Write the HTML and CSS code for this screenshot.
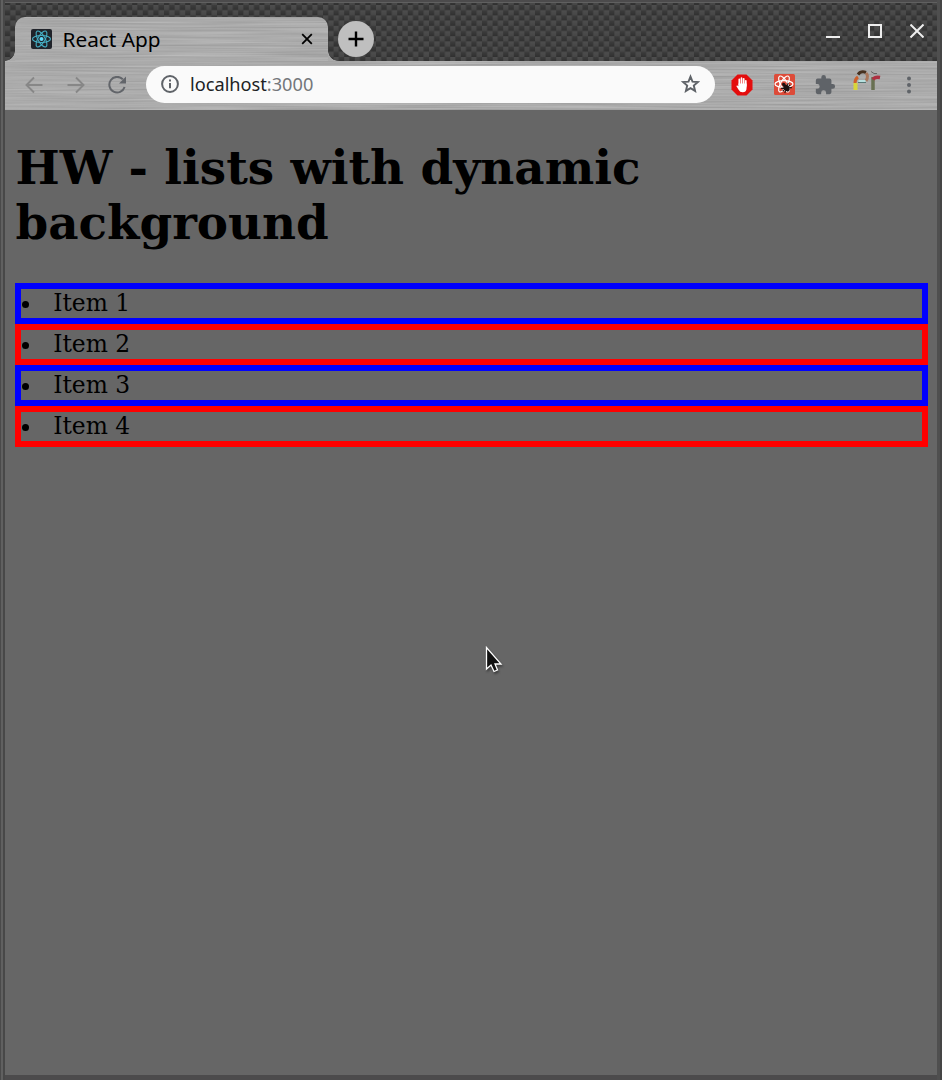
FILE: index.html
```
<!DOCTYPE html>
<html lang="en">
<head>
<meta charset="utf-8">
<title>React App</title>
<link rel="stylesheet" href="styles.css">
</head>
<body>
<div class="window">
  <header class="tabstrip">
    <svg class="texture" width="932" height="58">
      <defs>
        <linearGradient id="thread" x2="0" y2="1"><stop stop-color="#4e4e4e"/><stop offset=".45" stop-color="#474747"/><stop offset=".55" stop-color="#3b3b3b"/><stop offset="1" stop-color="#303030"/></linearGradient>
        <pattern id="weave" width="10.6" height="10.400" patternUnits="userSpaceOnUse" y="2"><rect width="5.300" height="10.400" fill="url(#thread)"/><rect x="5.300" y="-5.200" width="5.300" height="10.400" fill="url(#thread)"/><rect x="5.300" y="5.200" width="5.300" height="10.400" fill="url(#thread)"/></pattern>
      </defs>
      <rect width="100%" height="100%" fill="url(#weave)"/>
    </svg>
    <div class="tab">
      <svg class="texture metal-tab" width="313" height="44"><defs><filter id="brushed" x="0" y="0" width="100%" height="100%" color-interpolation-filters="sRGB"><feTurbulence type="fractalNoise" baseFrequency="0.008 0.6" numOctaves="2" seed="4"/><feColorMatrix values=".16 0 0 0 .59 .16 0 0 0 .59 .16 0 0 0 .59 0 0 0 0 1"/></filter></defs><rect width="100%" height="100%" filter="url(#brushed)"/></svg>
      <svg class="favicon" width="21" height="20" viewBox="0 0 21 20"><rect width="21" height="20" rx="2" fill="#20232a"/><g fill="none" stroke="#45afc5" stroke-width="1.1" transform="translate(10.5 10)"><ellipse rx="9" ry="3.5"/><ellipse rx="9" ry="3.5" transform="rotate(60)"/><ellipse rx="9" ry="3.5" transform="rotate(120)"/><circle r="2" fill="#61dafb" stroke="none"/></g></svg>
      <span class="tab-title">React App</span>
      <svg class="tab-close" width="12" height="12" viewBox="0 0 12 12"><path d="M1.2 1.2L10.800 10.800M10.800 1.200L1.200 10.800" stroke="#000" stroke-width="1.8"/></svg>
    </div>
    <button class="new-tab" aria-label="New tab"><svg width="16" height="16" viewBox="0 0 16 16"><path d="M8 .5v15M.5 8h15" stroke="#000" stroke-width="2.4"/></svg></button>
    <div class="controls">
      <svg width="14" height="14" viewBox="0 0 14 14"><path d="M0 13h14" stroke="#eee" stroke-width="2"/></svg>
      <svg width="14" height="14" viewBox="0 0 14 14"><rect x="1" y="1" width="12" height="12" fill="none" stroke="#eee" stroke-width="2"/></svg>
      <svg width="14" height="14" viewBox="0 0 14 14"><path d="M.5 .5l13 13M13.500 .5l-13 13" stroke="#eee" stroke-width="2"/></svg>
    </div>
  </header>
  <nav class="toolbar">
    <svg class="texture" width="932" height="49"><rect width="100%" height="100%" filter="url(#brushed)"/></svg>
    <svg class="back" width="18" height="18" viewBox="0 0 18 18"><path d="M17.500 9H1.500M9 1.500L1.500 9L9 16.500" fill="none" stroke="#878787" stroke-width="1.9"/></svg>
    <svg class="forward" width="18" height="18" viewBox="0 0 18 18"><path d="M.5 9h16M9 1.500L16.500 9L9 16.500" fill="none" stroke="#878787" stroke-width="1.9"/></svg>
    <svg class="reload" width="18" height="18" viewBox="0 0 18 18"><path d="M14.800 3.300A7.800 7.800 0 1 0 16.600 11" fill="none" stroke="#62656a" stroke-width="2"/><path d="M18 .5V7.500h-7z" fill="#62656a"/></svg>
    <div class="address">
      <svg width="18" height="18" viewBox="0 0 18 18"><circle cx="9" cy="9" r="7.900" fill="none" stroke="#5f6368" stroke-width="2"/><path d="M9 8v5.200M9 4.500v2" stroke="#5f6368" stroke-width="2"/></svg>
      <span class="url">localhost<span class="port">:3000</span></span>
      <svg class="star" width="20" height="20" viewBox="0 0 20 20"><path d="M10.500 2.600l2 5 5.400.45-4.100 3.550 1.300 5.300-4.600-2.800L5.900 16.900l1.300-5.300L3.100 8.050l5.400-.45z" fill="none" stroke="#5f6368" stroke-width="1.900"/></svg>
    </div>
    <div class="extensions">
      <svg class="blocker" width="22" height="22" viewBox="0 0 22 22"><path d="M6.500.5h9l6 6v9l-6 6h-9l-6-6v-9z" fill="#e40d0d"/><path d="M8.300 11V5.300M10.500 11V4.200M12.700 11V4.800M14.800 12V6.800" stroke="#fff" stroke-width="1.700" stroke-linecap="round"/><path d="M7.500 9.500h8.100v4.200q0 4.500-4 4.500-2.800 0-4-2.500L5.300 12q.8-1.300 2.200.3z" fill="#fff"/></svg>
      <svg class="react-ext" width="21" height="21" viewBox="0 0 21 21"><rect width="21" height="21" rx="1.500" fill="#dd4b39"/><g fill="none" stroke="#fff" stroke-width="1.200" transform="translate(10 10)"><ellipse rx="9" ry="3.400"/><ellipse rx="9" ry="3.400" transform="rotate(60)"/><ellipse rx="9" ry="3.400" transform="rotate(120)"/></g><g transform="translate(12.500 14) rotate(-38)"><ellipse rx="2.500" ry="3.800" fill="#1d1111"/><circle cy="-4.500" r="1.700" fill="#1d1111"/><path d="M-4.500-3L4.500 3M4.500-3L-4.500 3M-4.800 0H4.800" stroke="#1d1111" stroke-width="1.100"/></g></svg>
      <svg class="puzzle" width="22" height="22" viewBox="0 0 24 24"><path d="M20.500 11H19V7a2 2 0 0 0-2-2h-4V3.500a2.500 2.500 0 0 0-5 0V5H4a2 2 0 0 0-2 2v3.800h1.500a2.700 2.700 0 0 1 0 5.400H2V20a2 2 0 0 0 2 2h3.800v-1.500a2.700 2.700 0 0 1 5.400 0V22H17a2 2 0 0 0 2-2v-4h1.500a2.500 2.500 0 0 0 0-5z" fill="#5f6368"/></svg>
      <svg class="profile" width="28" height="22" viewBox="0 0 28 22"><g fill="none"><path d="M2.500 20v-7" stroke="#d8d63b" stroke-width="4"/><path d="M2 13q0-4 3-6" stroke="#cd5f2a" stroke-width="3"/><path d="M5 4.500Q8 .5 13 2.500" stroke="#46301f" stroke-width="3"/><path d="M13 3q3 3 0 8" stroke="#a9765b" stroke-width="3"/><path d="M5 12.500h8" stroke="#557674"/><path d="M5.500 11h7" stroke="#b7e0df" stroke-width="2"/><path d="M20 20V7" stroke="#687052" stroke-width="3.500"/><path d="M20 9.500q2-3 7-2" stroke="#ae3042" stroke-width="3.500"/><path d="M18 1.500l3 2h3" stroke="#666"/></g></svg>
      <svg class="menu" width="4" height="18" viewBox="0 0 4 18"><g fill="#5f6368"><circle cx="2" cy="2.500" r="2"/><circle cx="2" cy="9" r="2"/><circle cx="2" cy="15.500" r="2"/></g></svg>
    </div>
  </nav>
  <main class="page">
    <h1>HW - lists with dynamic background</h1>
    <ul class="items">
      <li class="item blue">Item 1</li>
      <li class="item red">Item 2</li>
      <li class="item blue">Item 3</li>
      <li class="item red">Item 4</li>
    </ul>
    <svg class="cursor" width="20" height="28" viewBox="0 0 20 28"><path d="M1.500 1.500v21.500l4.500-4 3 6.500 3.500-1.500-2.500-6H16z" fill="#111" stroke="#fff" stroke-width="1.300"/></svg>
  </main>
</div>
</body>
</html>
```
FILE: styles.css
```
* { box-sizing: border-box; }
body { margin: 0; background: #4f4f4f; }
svg { display: block; flex: none; }
.window {
  height: 1080px;
  padding: 2px 5px 5px;
  display: flex;
  flex-direction: column;
  background: linear-gradient(90deg, #4a4a4a 1px, #606060 1px 3px, #484848 3px 5px, transparent 5px 937px, #4f4f4f 937px 940px, #454545 940px), #4c4b4c;
}
.tabstrip {
  position: relative;
  height: 59px;
  display: flex;
  align-items: flex-start;
  padding: 15px 13px 0 10px;
  border-top: 1px solid #606060;
  background: #3f3f3f;
}
.tabstrip, .tab, .toolbar { isolation: isolate; }
.texture { position: absolute; z-index: -1; inset: 0; }
.metal-tab { border-radius: 10px 10px 0 0; }
.tab {
  position: relative;
  width: 313px;
  height: 44px;
  margin-top: -1px;
  display: flex;
  align-items: center;
  padding: 0 15px 0 16px;
}
.tab::before, .tab::after {
  content: "";
  position: absolute;
  bottom: 0;
  width: 10px;
  height: 10px;
}
.tab::before { left: -10px; background: radial-gradient(circle at 0 0, transparent 9.500px, #aaa 10px); }
.tab::after { right: -10px; background: radial-gradient(circle at 100% 0, transparent 9.500px, #aaa 10px); }
.tab-title { margin-left: 10.500px; flex: 1; font: 20.800px/28px "Noto Sans", sans-serif; color: #000; }
.new-tab {
  width: 36px;
  height: 36px;
  margin: 3px 0 0 10px;
  padding: 0;
  border: 0;
  border-radius: 50%;
  display: grid;
  place-items: center;
  background: #bfbfbf;
}
.controls { margin: 6px .5px 0 auto; display: flex; gap: 28px; }
.toolbar {
  position: relative;
  height: 49px;
  display: flex;
  align-items: center;
  padding: 0 26px 2px 20px;
  background: #acacac;
}
.forward { margin-left: 24px; }
.reload { margin-left: 23px; }
.address {
  width: 569px;
  height: 37px;
  margin-left: 20px;
  padding: 0 15px 1px;
  display: flex;
  align-items: center;
  border-radius: 19px;
  background: #fafafa;
}
.url { margin-left: 11px; flex: 1; font: 18.200px/26px "Noto Sans", sans-serif; color: #202124; }
.port { color: #74777b; }
.extensions { display: flex; align-items: center; margin-left: 16.400px; }
.react-ext { margin-left: 20.600px; }
.puzzle { margin-left: 19.400px; }
.profile { margin: -7px 0 0 16.400px; }
.menu { margin-left: 26px; }
.page {
  flex: 1;
  position: relative;
  padding: 30px 9px 0 10px;
  background: #666;
  color: #000;
  font-family: "DejaVu Serif", serif;
}
h1 { margin: 0 0 33px .5px; font-size: 46.800px; line-height: 55px; font-weight: 700; }
.items { margin: 0; padding: 0; list-style: disc inside; }
.item { height: 41px; padding-left: .8px; border: 6px solid; font-size: 23.400px; line-height: 29px; }
.blue { border-color: #00f; }
.red { border-color: #f00; }
.cursor { position: absolute; left: 480px; top: 536px; filter: drop-shadow(1px 2px 1px #0006); }
```
